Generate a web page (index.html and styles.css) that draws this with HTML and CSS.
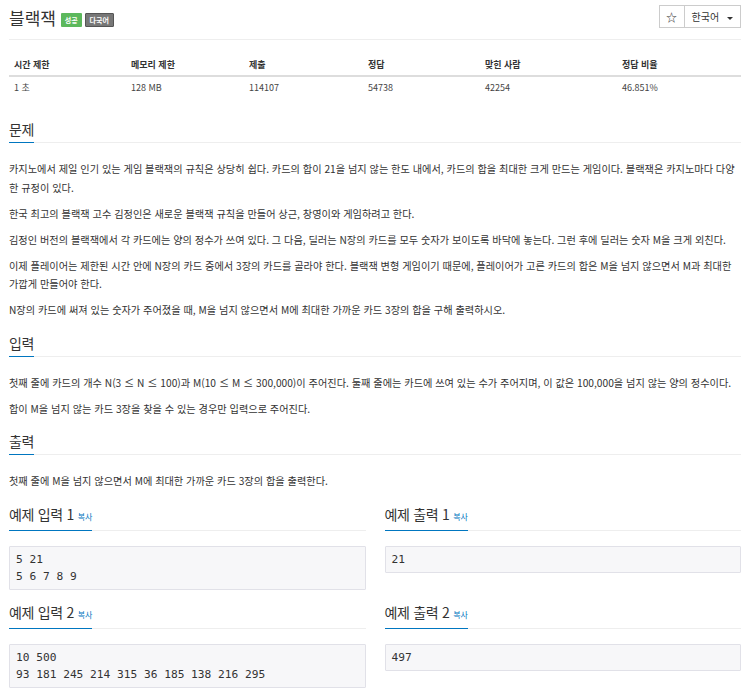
FILE: index.html
```html
<!DOCTYPE html>
<html lang="ko">

<head>
    <meta charset="UTF-8">
    <meta name="viewport" content="width=device-width, initial-scale=1.0">
    <title>블랙잭</title>
    <link rel="stylesheet" href="styles.css">
</head>

<body>
    <div class="page">

        <!-- Title -->
        <div class="problem-header">
            <h1>블랙잭 <span class="label label-success">성공</span><span class="label label-default">다국어</span></h1>
            <div class="btn-group">
                <button type="button" class="btn btn-star">☆</button>
                <button type="button" class="btn">한국어 <span class="caret"></span></button>
            </div>
        </div>

        <!-- Limits -->
        <table class="problem-info">
            <thead>
                <tr>
                    <th class="col-time">시간 제한</th>
                    <th class="col-mem">메모리 제한</th>
                    <th class="col-sub">제출</th>
                    <th class="col-ac">정답</th>
                    <th class="col-users">맞힌 사람</th>
                    <th>정답 비율</th>
                </tr>
            </thead>
            <tbody>
                <tr>
                    <td>1 초</td>
                    <td>128 MB</td>
                    <td>114107</td>
                    <td>54738</td>
                    <td>42254</td>
                    <td>46.851%</td>
                </tr>
            </tbody>
        </table>

        <section class="problem-section">
            <div class="headline">
                <h2>문제</h2>
            </div>
            <p>카지노에서 제일 인기 있는 게임 블랙잭의 규칙은 상당히 쉽다. 카드의 합이 21을 넘지 않는 한도 내에서, 카드의 합을 최대한 크게 만드는 게임이다. 블랙잭은 카지노마다 다양한 규정이 있다.</p>
            <p>한국 최고의 블랙잭 고수 김정인은 새로운 블랙잭 규칙을 만들어 상근, 창영이와 게임하려고 한다.</p>
            <p>김정인 버전의 블랙잭에서 각 카드에는 양의 정수가 쓰여 있다. 그 다음, 딜러는 N장의 카드를 모두 숫자가 보이도록 바닥에 놓는다. 그런 후에 딜러는 숫자 M을 크게 외친다.</p>
            <p>이제 플레이어는 제한된 시간 안에 N장의 카드 중에서 3장의 카드를 골라야 한다. 블랙잭 변형 게임이기 때문에, 플레이어가 고른 카드의 합은 M을 넘지 않으면서 M과 최대한 가깝게 만들어야 한다.</p>
            <p>N장의 카드에 써져 있는 숫자가 주어졌을 때, M을 넘지 않으면서 M에 최대한 가까운 카드 3장의 합을 구해 출력하시오.</p>
        </section>

        <section class="problem-section">
            <div class="headline">
                <h2>입력</h2>
            </div>
            <p>첫째 줄에 카드의 개수 N(3 ≤ N ≤ 100)과 M(10 ≤ M ≤ 300,000)이 주어진다. 둘째 줄에는 카드에 쓰여 있는 수가 주어지며, 이 값은 100,000을 넘지 않는 양의 정수이다.</p>
            <p>합이 M을 넘지 않는 카드 3장을 찾을 수 있는 경우만 입력으로 주어진다.</p>
        </section>

        <section class="problem-section">
            <div class="headline">
                <h2>출력</h2>
            </div>
            <p>첫째 줄에 M을 넘지 않으면서 M에 최대한 가까운 카드 3장의 합을 출력한다.</p>
        </section>

        <!-- Samples -->
        <div class="samples">
            <section class="sample">
                <div class="headline">
                    <h2>예제 입력 1 <a href="#" class="copy">복사</a></h2>
                </div>
                <pre class="sampledata">5 21
5 6 7 8 9</pre>
            </section>
            <section class="sample">
                <div class="headline">
                    <h2>예제 출력 1 <a href="#" class="copy">복사</a></h2>
                </div>
                <pre class="sampledata">21</pre>
            </section>
            <section class="sample">
                <div class="headline">
                    <h2>예제 입력 2 <a href="#" class="copy">복사</a></h2>
                </div>
                <pre class="sampledata">10 500
93 181 245 214 315 36 185 138 216 295</pre>
            </section>
            <section class="sample">
                <div class="headline">
                    <h2>예제 출력 2 <a href="#" class="copy">복사</a></h2>
                </div>
                <pre class="sampledata">497</pre>
            </section>
        </div>

    </div>
</body>

</html>
```

FILE: styles.css
```css
/* Basic Reset */
body,
h1,
h2,
p,
pre,
table {
    margin: 0;
    padding: 0;
}

body {
    font-family: 'Noto Sans CJK KR', sans-serif;
    font-size: 10.2px;
    color: #333;
    background: #fff;
}

.page {
    padding: 0 9px;
}

/* Title */
.problem-header {
    display: flex;
    justify-content: space-between;
    align-items: flex-start;
    padding-top: 5px;
    height: 34px;
    border-bottom: 1px solid #eee;
}

h1 {
    font-size: 17px;
    font-weight: normal;
    line-height: 26px;
}

.label {
    display: inline-block;
    vertical-align: 2px;
    font-size: 7px;
    font-weight: bold;
    line-height: 14px;
    height: 14px;
    box-sizing: border-box;
    color: #fff;
    padding: 0 4px;
    margin-left: 3px;
    border-radius: 1px;
}

.label-success {
    background-color: #5cb85c;
    margin-left: 0;
}

.label-default {
    background-color: #777;
    border: 1px solid #555;
    line-height: 12px;
}

.btn-group {
    display: flex;
}

.btn {
    font-family: 'Noto Sans CJK KR', sans-serif;
    font-size: 10px;
    color: #333;
    background: #fff;
    border: 1px solid #ccc;
    height: 23px;
    padding: 0 7px;
    margin: 0;
}

.btn-star {
    width: 26px;
    padding: 0;
    font-size: 11px;
}

.btn + .btn {
    margin-left: -1px;
}

.caret {
    display: inline-block;
    width: 0;
    height: 0;
    margin-left: 5px;
    vertical-align: middle;
    border-top: 3px solid #333;
    border-left: 3px solid transparent;
    border-right: 3px solid transparent;
}

/* Limits table */
.problem-info {
    width: 100%;
    table-layout: fixed;
    border-collapse: collapse;
    margin-top: 13px;
    margin-bottom: 21px;
    font-size: 9px;
}

.problem-info th,
.problem-info td {
    box-sizing: border-box;
    text-align: left;
    padding: 4px 5px;
    line-height: 13px;
}

.problem-info th {
    font-weight: bold;
    padding-top: 5px;
    border-bottom: 2px solid #ddd;
}

.problem-info td {
    color: #444;
}

.col-time,
.col-ac {
    width: 117px;
}

.col-mem {
    width: 118px;
}

.col-sub {
    width: 119px;
}

.col-users {
    width: 137px;
}

/* Sections */
.headline {
    border-bottom: 1px solid #eee;
    margin-bottom: 17px;
}

.headline h2 {
    display: inline-block;
    font-size: 14px;
    font-weight: normal;
    line-height: 20px;
    padding-bottom: 3px;
    margin-bottom: -1px;
    border-bottom: 1px solid #0076c0;
    letter-spacing: -0.3px;
}

.problem-section {
    margin-bottom: 13px;
}

.problem-section p {
    line-height: 18.5px;
    margin-bottom: 7.5px;
}

/* Samples */
.samples {
    display: grid;
    grid-template-columns: 1fr 1fr;
    column-gap: 19px;
    row-gap: 12px;
    align-items: start;
    margin-top: 2px;
}

.sample .headline {
    margin-bottom: 15px;
}

.copy {
    font-size: 8px;
    letter-spacing: 0;
    color: #0076c0;
    text-decoration: none;
}

.sampledata {
    font-family: 'DejaVu Sans Mono', monospace;
    font-size: 11.2px;
    line-height: 17px;
    padding: 4px 6px;
    color: #333;
    background-color: #f7f7f9;
    border: 1px solid #e1e1e8;
    border-radius: 1px;
}
```
